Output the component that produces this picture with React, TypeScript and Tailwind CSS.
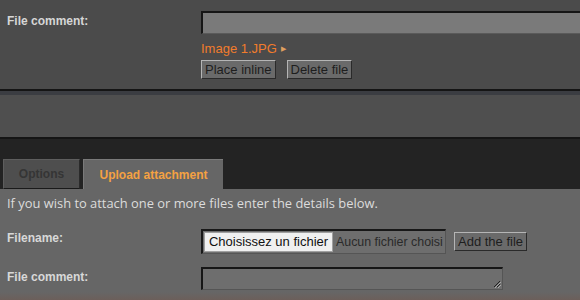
export default function App() {
  const font = { fontFamily: '"Liberation Sans", "Open Sans", sans-serif' }
  const btn =
    'h-[19px] px-[3px] bg-[#6a6a6a] text-[#1e1e1e] text-[13px] leading-none border border-t-[#b5b5b5] border-l-[#b5b5b5] border-b-[#2a2a2a] border-r-[#2a2a2a]'

  return (
    <div className="w-[580px] h-[300px] overflow-hidden bg-[#232323]" style={font}>
      {/* attached file block */}
      <div className="h-[89px] bg-[#4b4b4b] flex pt-[11px]">
        <div className="w-[201px] pl-[7px] pt-[1px] text-[12px] font-bold text-[#d6d6d6]">File comment:</div>
        <div className="flex-1 flex flex-col">
          <div className="h-[23px] bg-[#7a7a7a] border-t-2 border-l-2 border-[#161616] border-b border-b-[#5a5a5a]" />
          <div className="mt-[7px] text-[13px] text-[#f27c2c] flex items-center gap-[4px] leading-none h-[14px]">
            Image 1.JPG
            <span className="text-[7px] text-[#e0a060]">▶</span>
          </div>
          <div className="mt-[5px] flex gap-[11px]">
            <button className={btn}>Place inline</button>
            <button className={btn}>Delete file</button>
          </div>
        </div>
      </div>
      <div className="h-[2px] bg-[#151515]" />
      <div className="h-[4px] bg-[#3b3d42]" />
      <div className="h-[42px] bg-[#4f4f4f]" />
      <div className="h-[2px] bg-[#151515]" />

      {/* tabs */}
      <div className="h-[20px]" />
      <div className="flex items-end gap-[3px] pl-[3px] h-[30px]">
        <div className="w-[77px] h-[30px] bg-[#4e4e4e] border border-[#5e5e5e] border-b-[#1a1a1a] border-r-[#2a2a2a] flex items-center justify-center text-[12px] font-bold text-[#353535]">
          Options
        </div>
        <div className="w-[140px] h-[30px] bg-[#666666] border-t border-l border-[#7a7a7a] flex items-center justify-center text-[12px] font-bold text-[#f5a142]">
          Upload attachment
        </div>
      </div>

      {/* content */}
      <div className="bg-[#666666] h-[111px] flex flex-col relative">
        <div
          className="pl-[7px] pt-[6px] text-[12.9px] text-[#dcdcdc] leading-[16px]"
          style={{ fontFamily: '"Open Sans", "Liberation Sans", sans-serif' }}
        >
          If you wish to attach one or more files enter the details below.
        </div>
        <div className="flex mt-[18px]">
          <div className="w-[201px] pl-[7px] text-[12px] font-bold text-[#d8d8d8]">Filename:</div>
          <div className="flex items-center gap-[8px]">
            <div className="w-[245px] h-[25px] bg-[#6e6e6e] border-t-2 border-l-2 border-[#181818] border-b border-r border-b-[#555] border-r-[#555] flex items-center overflow-hidden">
              <div className="h-[20px] w-[129px] shrink-0 ml-[1px] bg-[#f0f0f0] border border-[#a0a0a0] text-[#111] text-[13px] flex items-center justify-center">
                Choisissez un fichier
              </div>
              <div className="pl-[3px] text-[12.4px] text-[#2a2a2a] whitespace-nowrap">Aucun fichier choisi</div>
            </div>
            <button className={btn}>Add the file</button>
          </div>
        </div>
        <div className="flex mt-[13px]">
          <div className="w-[201px] pl-[7px] pt-[1px] text-[12px] font-bold text-[#d8d8d8]">File comment:</div>
          <div className="relative w-[302px] h-[23px] bg-[#6e6e6e] border-t-2 border-l-2 border-[#161616] border-b border-r border-b-[#555] border-r-[#555]">
            <svg className="absolute right-[1px] bottom-[1px]" width="8" height="8" viewBox="0 0 8 8">
              <path d="M7 1L1 7M7 4L4 7" stroke="#222" strokeWidth="1" />
              <path d="M8 2L2 8M8 5L5 8" stroke="#aaa" strokeWidth="1" />
            </svg>
          </div>
        </div>
        <div className="absolute left-0 right-0 bottom-0 h-[8px] bg-gradient-to-b from-[#666666] to-[#6c5f5a]" />
      </div>
    </div>
  )
}
